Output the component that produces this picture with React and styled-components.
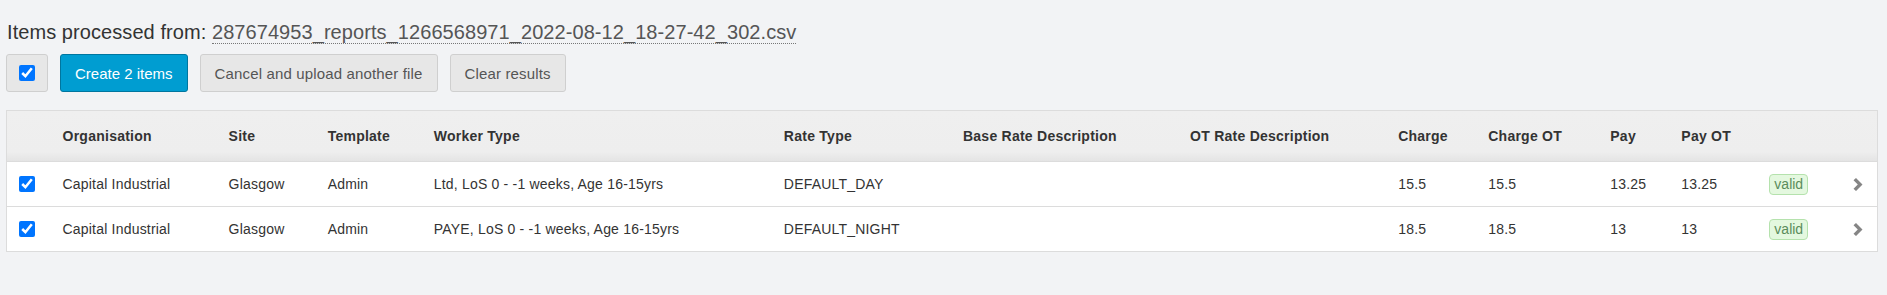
import React from "react";
import styled, { createGlobalStyle } from "styled-components";

const Global = createGlobalStyle`
  html, body { margin: 0; padding: 0; background: #f2f3f5; }
  body { font-family: "Liberation Sans", Arial, Helvetica, sans-serif; color: #333; }
  * { box-sizing: border-box; }
`;

const Page = styled.div`
  padding: 21px 9px 0 6px;
`;

const Title = styled.h3`
  margin: 0 0 11px 1px;
  font-size: 20px;
  line-height: 22px;
  font-weight: normal;
  color: #333;
  letter-spacing: 0.07px;
  white-space: nowrap;
`;

const FileName = styled.span`
  color: #555;
  border-bottom: 1px dotted #777;
`;

const Toolbar = styled.div`
  display: flex;
  gap: 12px;
  align-items: center;
  margin-bottom: 18px;
`;

const Button = styled.button`
  height: 38px;
  padding: 0 ${(p) => (p.$compact ? "0" : "14px")};
  width: ${(p) => (p.$compact ? "42px" : "auto")};
  display: inline-flex;
  align-items: center;
  justify-content: center;
  font-family: "Liberation Sans", Arial, sans-serif;
  font-size: 15px;
  letter-spacing: ${(p) => (p.$primary ? "0" : "0.15px")};
  border-radius: 3px;
  border: 1px solid ${(p) => (p.$primary ? "#00769f" : "#cfcfcf")};
  background: ${(p) => (p.$primary ? "#009dd1" : "#e7e7e7")};
  color: ${(p) => (p.$primary ? "#fff" : "#555")};
  cursor: pointer;
`;

const Check = styled.input.attrs({ type: "checkbox" })`
  width: 16px;
  height: 16px;
  margin: 0;
  accent-color: #0075ff;
  display: block;
`;

const Table = styled.table`
  width: 1872px;
  table-layout: fixed;
  border-collapse: collapse;
  border: 1px solid #dcdcdc;
  background: #fff;
  font-size: 14px;
`;

const HeadRow = styled.tr`
  background: linear-gradient(#efefef 0%, #eeeeee 80%, #e3e3e3 100%);
`;

const Th = styled.th`
  height: 51px;
  padding: 0 0 0 8px;
  text-align: left;
  font-weight: bold;
  color: #333;
  letter-spacing: 0.25px;
  white-space: nowrap;
`;

const Tr = styled.tr`
  border-top: 1px solid #dcdcdc;
`;

const Td = styled.td`
  height: 45px;
  padding: 0 0 0 ${(p) => (p.$first ? "12px" : "8px")};
  color: #333;
  letter-spacing: 0.2px;
  white-space: nowrap;
  vertical-align: middle;
`;

const Badge = styled.span`
  display: inline-flex;
  align-items: center;
  height: 21px;
  padding: 0 4px;
  border: 1px solid #b5e2ad;
  background: #e4f8df;
  border-radius: 4px;
  color: #5b8c5b;
  font-size: 14px;
  letter-spacing: 0;
`;

const Chevron = () => (
  <svg width="12" height="13" viewBox="0 0 12 13" style={{ display: "block" }}>
    <path d="M1.5 2.2 L4 0 L10.5 6.5 L4 13 L1.5 10.8 L5.8 6.5 Z" fill="#858585" />
  </svg>
);

const widths = [48, 166, 99, 106, 350, 179, 227, 208, 90, 122, 71, 88, 83, 33];
const headers = [
  "",
  "Organisation",
  "Site",
  "Template",
  "Worker Type",
  "Rate Type",
  "Base Rate Description",
  "OT Rate Description",
  "Charge",
  "Charge OT",
  "Pay",
  "Pay OT",
  "",
  "",
];

const rows = [
  ["Capital Industrial", "Glasgow", "Admin", "Ltd, LoS 0 - -1 weeks, Age 16-15yrs", "DEFAULT_DAY", "", "", "15.5", "15.5", "13.25", "13.25"],
  ["Capital Industrial", "Glasgow", "Admin", "PAYE, LoS 0 - -1 weeks, Age 16-15yrs", "DEFAULT_NIGHT", "", "", "18.5", "18.5", "13", "13"],
];

export default function App() {
  return (
    <Page>
      <Global />
      <Title>
        Items processed from: <FileName>287674953_reports_1266568971_2022-08-12_18-27-42_302.csv</FileName>
      </Title>
      <Toolbar>
        <Button $compact>
          <Check defaultChecked />
        </Button>
        <Button $primary>Create 2 items</Button>
        <Button>Cancel and upload another file</Button>
        <Button>Clear results</Button>
      </Toolbar>
      <Table>
        <colgroup>
          {widths.map((w, i) => (
            <col key={i} style={{ width: w }} />
          ))}
        </colgroup>
        <thead>
          <HeadRow>
            {headers.map((h, i) => (
              <Th key={i}>{h}</Th>
            ))}
          </HeadRow>
        </thead>
        <tbody>
          {rows.map((r, i) => (
            <Tr key={i}>
              <Td $first>
                <Check defaultChecked />
              </Td>
              {r.map((c, j) => (
                <Td key={j}>{c}</Td>
              ))}
              <Td>
                <Badge>valid</Badge>
              </Td>
              <Td>
                <Chevron />
              </Td>
            </Tr>
          ))}
        </tbody>
      </Table>
    </Page>
  );
}
